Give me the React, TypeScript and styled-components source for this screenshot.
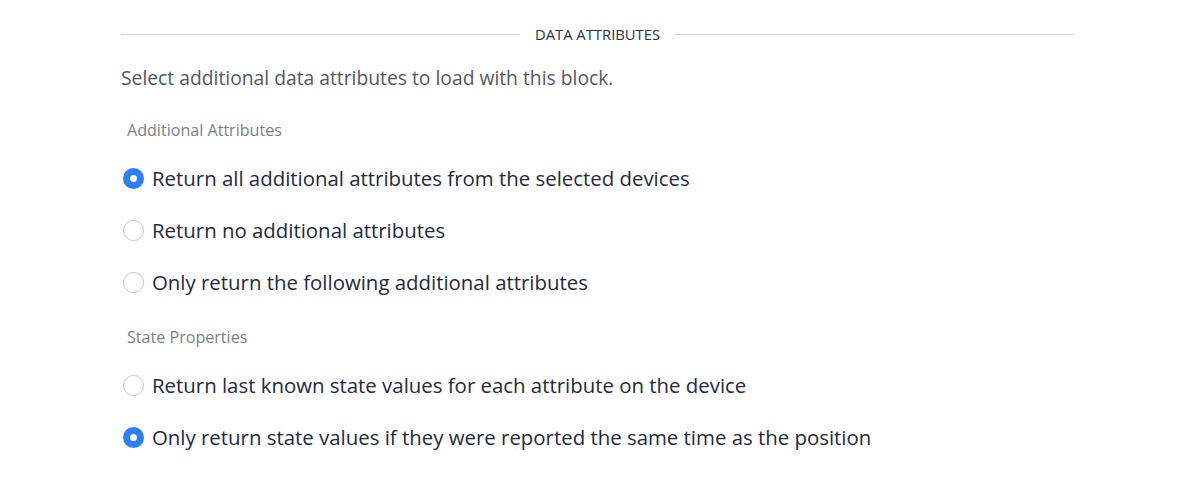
import React, { useState } from "react";
import styled, { createGlobalStyle } from "styled-components";

const GlobalStyle = createGlobalStyle`
  body {
    margin: 0;
    background: #ffffff;
    font-family: "Open Sans", "Noto Sans", sans-serif;
  }
`;

const Page = styled.div`
  width: 953px;
  padding: 23px 0 0 121px;
`;

const Divider = styled.div`
  display: flex;
  align-items: center;
  gap: 15px;
  height: 22px;
`;

const Rule = styled.div`
  flex: 1;
  height: 1px;
  background: #cfd1d6;
`;

const DividerTitle = styled.span`
  font-size: 14.8px;
  color: #2c3142;
  text-transform: uppercase;
`;

const Description = styled.p`
  margin: 21px 0 0;
  font-size: 19.3px;
  line-height: 24px;
  color: #54585f;
`;

const SectionLabel = styled.div<{ $top: number }>`
  margin: 0 0 0 6px;
  padding-top: ${(p) => p.$top}px;
  font-size: 16.1px;
  line-height: 20px;
  color: #7b7f87;
`;

const Options = styled.div<{ $top: number }>`
  display: flex;
  flex-direction: column;
  gap: 26px;
  margin-top: ${(p) => p.$top}px;
`;

const Option = styled.label`
  display: flex;
  align-items: center;
  gap: 8px;
  height: 26px;
  cursor: pointer;
`;

const RadioDot = styled.span<{ $checked: boolean }>`
  box-sizing: border-box;
  width: 21px;
  height: 21px;
  margin-left: 2px;
  border-radius: 50%;
  flex-shrink: 0;
  background: #ffffff;
  border: ${(p) => (p.$checked ? "7.5px solid #2d7ff9" : "1px solid #c4c6ca")};
`;

const OptionText = styled.span`
  font-size: 20.4px;
  line-height: 26px;
  color: #232a3e;
`;

type Group = {
  label: string;
  top: number;
  gap: number;
  options: string[];
};

const groups: Group[] = [
  {
    label: "Additional Attributes",
    top: 30,
    gap: 25,
    options: [
      "Return all additional attributes from the selected devices",
      "Return no additional attributes",
      "Only return the following additional attributes",
    ],
  },
  {
    label: "State Properties",
    top: 32,
    gap: 25,
    options: [
      "Return last known state values for each attribute on the device",
      "Only return state values if they were reported the same time as the position",
    ],
  },
];

const App: React.FC = () => {
  const [selected, setSelected] = useState<number[]>([0, 1]);

  return (
    <>
      <GlobalStyle />
      <Page>
        <Divider>
          <Rule />
          <DividerTitle>Data Attributes</DividerTitle>
          <Rule />
        </Divider>
        <Description>Select additional data attributes to load with this block.</Description>
        {groups.map((group, gi) => (
          <div key={group.label}>
            <SectionLabel $top={group.top}>{group.label}</SectionLabel>
            <Options $top={group.gap}>
              {group.options.map((text, oi) => (
                <Option
                  key={text}
                  onClick={() =>
                    setSelected((prev) => prev.map((v, i) => (i === gi ? oi : v)))
                  }
                >
                  <RadioDot $checked={selected[gi] === oi} />
                  <OptionText>{text}</OptionText>
                </Option>
              ))}
            </Options>
          </div>
        ))}
      </Page>
    </>
  );
};

export default App;
